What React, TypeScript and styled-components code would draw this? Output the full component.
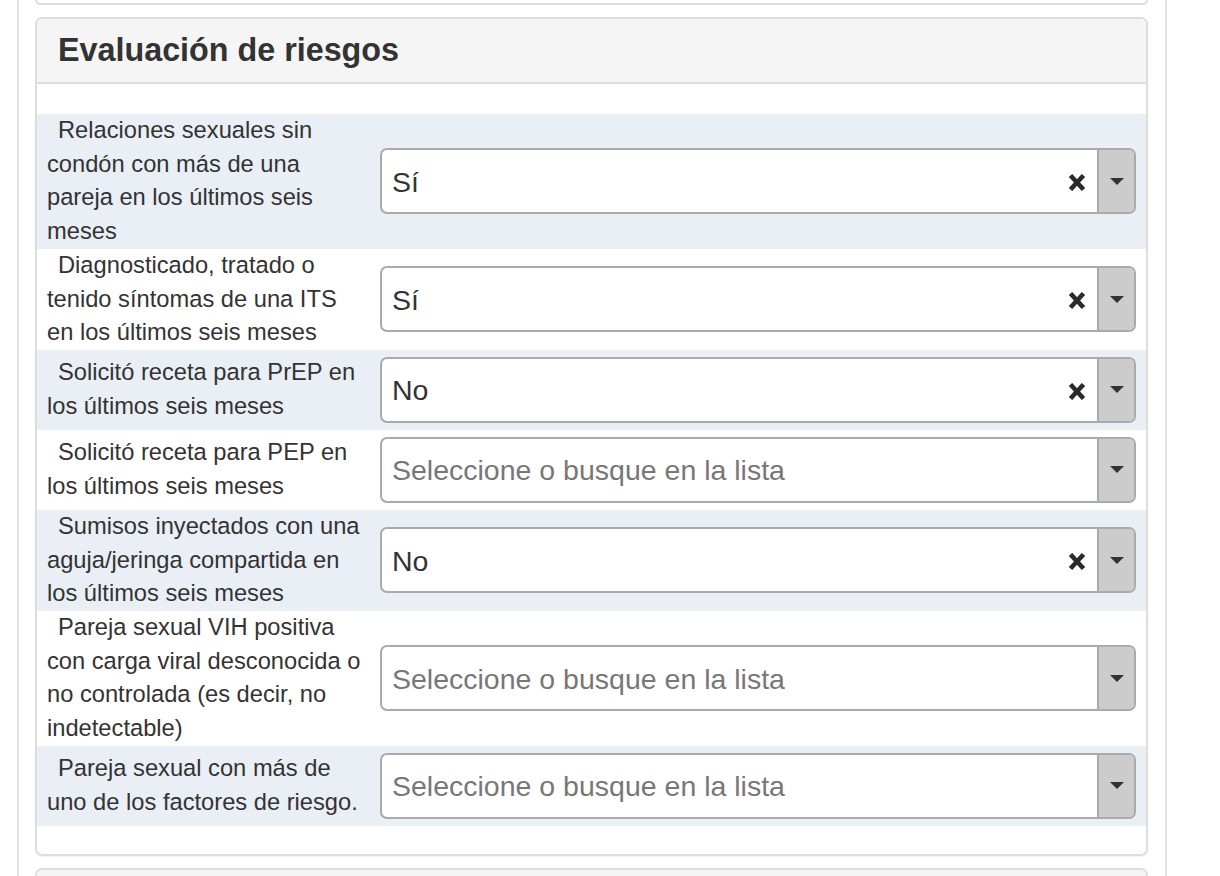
import React from "react";
import styled, { createGlobalStyle } from "styled-components";

const GlobalStyle = createGlobalStyle`
  html, body {
    margin: 0;
    padding: 0;
    background: #fff;
  }
  body {
    font-family: "Liberation Sans", Helvetica, Arial, sans-serif;
    color: #333;
  }
`;

type Risk = {
    label: string;
    value: string | null;
};

const risks: Risk[] = [
    { label: "Relaciones sexuales sin condón con más de una pareja en los últimos seis meses", value: "Sí" },
    { label: "Diagnosticado, tratado o tenido síntomas de una ITS en los últimos seis meses", value: "Sí" },
    { label: "Solicitó receta para PrEP en los últimos seis meses", value: "No" },
    { label: "Solicitó receta para PEP en los últimos seis meses", value: null },
    { label: "Sumisos inyectados con una aguja/jeringa compartida en los últimos seis meses", value: "No" },
    { label: "Pareja sexual VIH positiva con carga viral desconocida o no controlada (es decir, no indetectable)", value: null },
    { label: "Pareja sexual con más de uno de los factores de riesgo.", value: null },
];

const Page = styled.div`
    margin-left: 17px;
    width: 1150px;
    height: 876px;
    box-sizing: border-box;
    border-left: 2px solid #e3e3e3;
    border-right: 2px solid #e3e3e3;
    padding: 0 17px 0 16px;
    overflow: hidden;
`;

const PanelTail = styled.div`
    height: 3px;
    border: 2px solid #ddd;
    border-top: none;
    border-radius: 0 0 7px 7px;
    margin-bottom: 12px;
`;

const Panel = styled.section`
    border: 2px solid #ddd;
    border-radius: 7px;
    background: #fff;
    box-shadow: 0 1px 1px rgba(0, 0, 0, 0.05);
    margin-bottom: 12px;
    overflow: hidden;
`;

const PanelHeading = styled.div`
    height: 63px;
    display: flex;
    align-items: center;
    padding-left: 21px;
    background: #f5f5f5;
    border-bottom: 2px solid #ddd;
`;

const Title = styled.h3`
    margin: 0;
    font-size: 32.3px;
    font-weight: bold;
    color: #333;
`;

const PanelBody = styled.div`
    padding: 30px 0 28px;
`;

const Row = styled.div<{ $shaded: boolean }>`
    display: grid;
    grid-template-columns: 343px 1fr;
    align-items: center;
    background: ${p => (p.$shaded ? "#eaeff6" : "#fff")};
`;

const Label = styled.label`
    padding: 0 14px 0 10px;
    font-size: 23.7px;
    line-height: 33.7px;
    text-indent: 11px;
    color: #333;
`;

const Field = styled.div`
    padding: 7px 10px 7px 0;
`;

const SelectBox = styled.div`
    height: 66px;
    box-sizing: border-box;
    display: flex;
    align-items: center;
    border: 2px solid #aaa;
    border-radius: 7px;
    background: #fff;
    overflow: hidden;
`;

const Rendered = styled.span<{ $placeholder: boolean }>`
    flex: 1;
    padding: 2px 0 0 10px;
    font-size: 28.5px;
    color: ${p => (p.$placeholder ? "#777" : "#333")};
    white-space: nowrap;
`;

const Clear = styled.span`
    display: flex;
    margin: 3px 11px 0 0;
`;

const Arrow = styled.span`
    align-self: stretch;
    width: 35px;
    display: flex;
    align-items: center;
    justify-content: center;
    background: #ccc;
    border-left: 2px solid #aaa;
`;

const Caret = styled.b`
    width: 0;
    height: 0;
    border-left: 7px solid transparent;
    border-right: 7px solid transparent;
    border-top: 7px solid #333;
`;

const Select = ({ value }: { value: string | null }) => (
    <SelectBox>
        <Rendered $placeholder={!value}>{value || "Seleccione o busque en la lista"}</Rendered>
        {value && (
            <Clear>
                <svg width="18" height="17" viewBox="0 0 18 17">
                    <path d="M2.5 1.5 L15.5 15.5 M15.5 1.5 L2.5 15.5" stroke="#2b2b2b" strokeWidth="4.6" fill="none" />
                </svg>
            </Clear>
        )}
        <Arrow>
            <Caret />
        </Arrow>
    </SelectBox>
);

const App = () => (
    <>
        <GlobalStyle />
        <Page>
            <PanelTail />
            <Panel>
                <PanelHeading>
                    <Title>Evaluación de riesgos</Title>
                </PanelHeading>
                <PanelBody>
                    {risks.map((r, i) => (
                        <Row key={r.label} $shaded={i % 2 === 0}>
                            <Label>{r.label}</Label>
                            <Field>
                                <Select value={r.value} />
                            </Field>
                        </Row>
                    ))}
                </PanelBody>
            </Panel>
            <Panel>
                <PanelHeading />
            </Panel>
        </Page>
    </>
);

export default App;
